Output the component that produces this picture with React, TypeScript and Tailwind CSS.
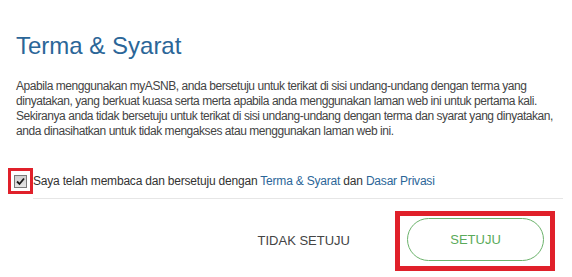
import React from "react";

export default function App() {
  return (
    <div className="w-[572px] h-[277px] bg-white overflow-hidden" style={{ fontFamily: '"Liberation Sans", Arial, sans-serif' }}>
      <div className="pl-[16px] pr-[9px] pt-[32px]">
        <h1 className="text-[24px] leading-[28px] text-[#2b6698] font-normal">Terma &amp; Syarat</h1>
        <p className="mt-[19px] text-[12px] leading-[15px] tracking-[-0.45px] text-[#444] w-[545px]">
          Apabila menggunakan myASNB, anda bersetuju untuk terikat di sisi undang-undang dengan terma yang dinyatakan, yang berkuat kuasa serta merta apabila anda menggunakan laman web ini untuk pertama kali. Sekiranya anda tidak bersetuju untuk terikat di sisi undang-undang dengan terma dan syarat yang dinyatakan, anda dinasihatkan untuk tidak mengakses atau menggunakan laman web ini.
        </p>
      </div>
      <div className="flex items-center mt-[29px] pl-[8px]">
        <div className="w-[25px] h-[26px] border-[3px] border-[#e0202a] flex items-center justify-center">
          <div className="w-[13px] h-[13px] border border-[#7a7a7a] bg-gradient-to-b from-[#cfcfcf] to-[#e6e6e6] flex items-center justify-center">
            <svg width="9" height="9" viewBox="0 0 9 9">
              <path d="M1 4.5 L3.5 7 L8 1.5" stroke="#1a1a1a" strokeWidth="1.8" fill="none" />
            </svg>
          </div>
        </div>
        <span className="text-[12px] tracking-[-0.2px] text-[#333] leading-[16px]">
          Saya telah membaca dan bersetuju dengan <span className="text-[#2b6698]">Terma &amp; Syarat</span> dan <span className="text-[#2b6698]">Dasar Privasi</span>
        </span>
      </div>
      <div className="ml-[33px] mr-[9px] mt-[4px] h-px bg-[#e6e6e6]" />
      <div className="flex items-center justify-end pr-[17px] mt-[12px]">
        <span className="text-[13px] text-[#444] mr-[45px]">TIDAK SETUJU</span>
        <div className="border-[5px] border-[#e0202a] pl-[7px] pr-[6px] pt-[2px] pb-[5px]">
          <div className="w-[137px] h-[43px] rounded-full border border-[#6cb36c] flex items-center justify-center text-[13px] text-[#5aaa5a]">
            SETUJU
          </div>
        </div>
      </div>
    </div>
  );
}
